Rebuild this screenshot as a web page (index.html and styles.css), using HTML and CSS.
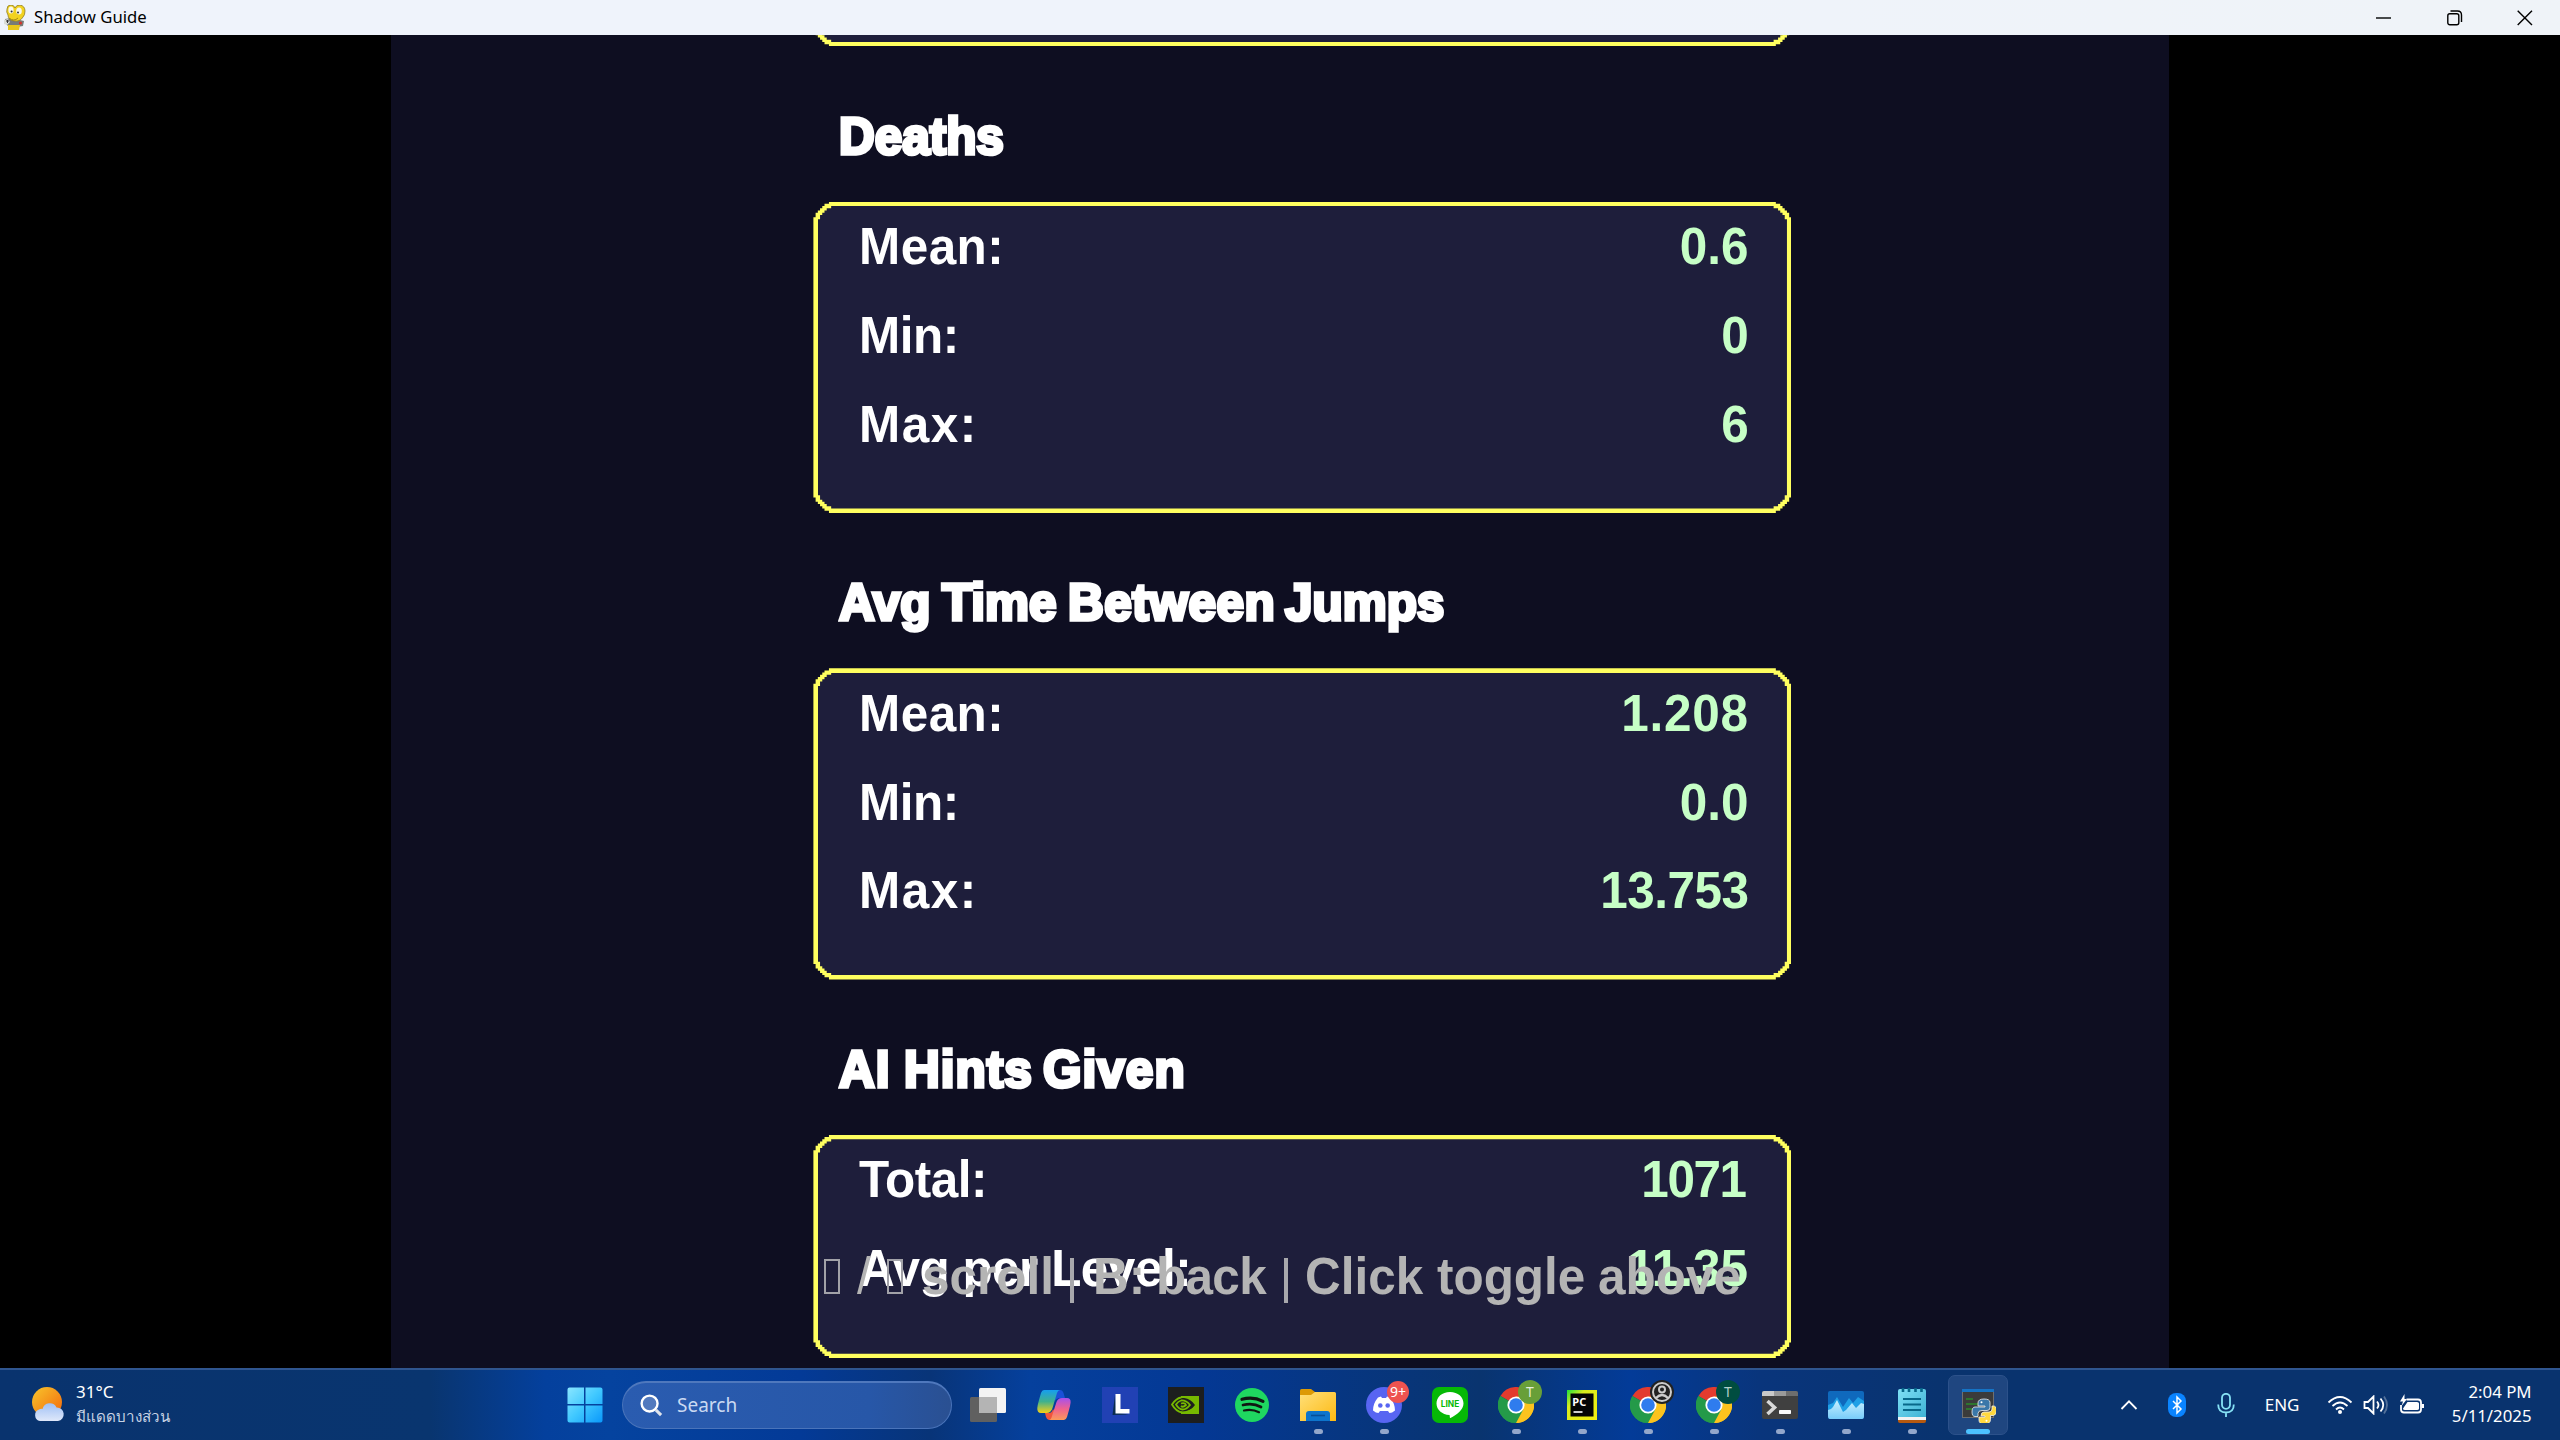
FILE: index.html
```html
<!DOCTYPE html>
<html lang="en">
<head>
<meta charset="utf-8">
<title>Shadow Guide</title>
<link rel="stylesheet" href="styles.css">
</head>
<body>
<header class="titlebar">
  <svg class="app-icon" viewBox="0 0 22 25">
    <path d="M1 14l6-1 9 2 4 1-1 5-6 1-9-1-3-3z" fill="#777c78"/>
    <path d="M4 20h12l-1 5H4z" fill="#e8c81c"/>
    <path d="M3 4Q3 0 7 0q3 0 4 3 1-3 5-3 5 1 5 6 0 4-2 6-3 5-9 4-6-1-6-6Q2 7 3 4z" fill="#f2d21f" stroke="#8f7d28" stroke-width=".8"/>
    <ellipse cx="7" cy="5" rx="2.6" ry="3.6" fill="#f7f7ee"/><ellipse cx="15" cy="6" rx="2.8" ry="3.6" fill="#f7f7ee"/>
    <circle cx="7.6" cy="6.6" r="1" fill="#333"/><circle cx="14" cy="7.4" r="1" fill="#333"/>
    <path d="M0 15l4-1 2 3-3 3-3-1z" fill="#d9dcd8"/><path d="M2 16h3M3.500 15v3" stroke="#333"/><circle cx="16.500" cy="18" r="1.600" fill="#d5322c"/>
    <path d="M5 13q5 4 9 0" fill="none" stroke="#a28718"/>
  </svg>
  <span class="title">Shadow Guide</span>
  <div class="window-buttons">
    <svg viewBox="0 0 16 16"><path d="M0 8h15" /></svg>
    <svg viewBox="0 0 16 16"><rect x=".8" y="3.800" width="11" height="11" rx="2"/><path d="M3.500 1h7q4 0 4 4v7"/></svg>
    <svg viewBox="0 0 16 16"><path d="M.7.7l14.300 14.300M15 .7L.7 15"/></svg>
  </div>
</header>

<main class="stage">
  <div class="game">
    <div class="card"></div>

    <section class="stat">
      <h2 class="h-deaths"><span>Deaths</span></h2>
      <div class="card">
        <div class="row"><span class="label mean">Mean:</span><span class="value">0.6</span></div>
        <div class="row"><span class="label">Min:</span><span class="value">0</span></div>
        <div class="row"><span class="label max">Max:</span><span class="value">6</span></div>
      </div>
    </section>

    <section class="stat">
      <h2 class="h-jumps"><span>Avg</span> <span>Time</span> <span class="loose">Between</span> <span>Jumps</span></h2>
      <div class="card">
        <div class="row"><span class="label mean">Mean:</span><span class="value wide">1.208</span></div>
        <div class="row"><span class="label">Min:</span><span class="value">0.0</span></div>
        <div class="row"><span class="label max">Max:</span><span class="value tight">13.753</span></div>
      </div>
    </section>

    <section class="stat">
      <h2 class="h-hints"><span>AI</span> <span>Hints</span> <span>Given</span></h2>
      <div class="card short">
        <div class="row"><span class="label">Total:</span><span class="value ends-one">1071</span></div>
        <div class="row"><span class="label">Avg per Level:</span><span class="value">11.35</span></div>
      </div>
    </section>

    <div class="hint">
      <i class="key"></i> <span class="slash">/</span> <i class="key"></i> <span>scroll</span> <b class="bar"></b> <span>B:</span> <span class="back">back</span> <b class="bar"></b> <span>Click</span> <span>toggle</span> <span>above</span>
    </div>
  </div>
</main>

<footer class="taskbar">
  <svg width="0" height="0" class="defs">
    <defs>
      <linearGradient id="sun" x1="0" y1="0" x2="1" y2="1"><stop offset="0" stop-color="#f8c62c"/><stop offset="1" stop-color="#f2660c"/></linearGradient>
      <linearGradient id="cloud" x1="0" y1="0" x2="0" y2="1"><stop offset="0" stop-color="#9fc0f5"/><stop offset="1" stop-color="#dfe8fa"/></linearGradient>
      <linearGradient id="win" x1="0" y1="0" x2="1" y2="1"><stop offset="0" stop-color="#8ae6ff"/><stop offset=".5" stop-color="#40c8ff"/><stop offset="1" stop-color="#0a98fb"/></linearGradient>
      <linearGradient id="cpA" x1="0" y1="0" x2="0" y2="1"><stop offset="0" stop-color="#169ef0"/><stop offset=".5" stop-color="#3fb18e"/><stop offset="1" stop-color="#f6cf16"/></linearGradient>
      <linearGradient id="cpB" x1="0" y1="0" x2="0" y2="1"><stop offset="0" stop-color="#a650ee"/><stop offset=".5" stop-color="#f0628e"/><stop offset="1" stop-color="#fb9a5a"/></linearGradient>
      <linearGradient id="folder" x1="0" y1="0" x2="1" y2="1"><stop offset="0" stop-color="#ffe07a"/><stop offset="1" stop-color="#fdb912"/></linearGradient>
      <linearGradient id="pc" x1="0" y1="0" x2="1" y2="1"><stop offset="0" stop-color="#1ee03c"/><stop offset=".3" stop-color="#d8ec1e"/><stop offset="1" stop-color="#f4ee10"/></linearGradient>
      <linearGradient id="water" x1="0" y1="0" x2="0" y2="1"><stop offset="0" stop-color="#c8f0ff"/><stop offset="1" stop-color="#78ccfa"/></linearGradient>
      <linearGradient id="note" x1="0" y1="0" x2="1" y2="1"><stop offset="0" stop-color="#7fe0f5"/><stop offset="1" stop-color="#3db2d4"/></linearGradient>
      <symbol id="chrome" viewBox="0 0 36 36">
        <path d="M18 18L2.400 9A18 18 0 0 1 33.600 9z" fill="#e33b2e"/>
        <path d="M18 18L33.600 9A18 18 0 0 1 18 36z" fill="#fcc31e"/>
        <path d="M18 18V36A18 18 0 0 1 2.400 9z" fill="#249a49"/>
        <path d="M18 9.500H33.900A18 18 0 0 1 18 36L25.400 22.200z" fill="#fcc31e"/>
        <path d="M2.400 9L10.600 22.300 18 26.500 25.400 22.300 18 36A18 18 0 0 1 2.400 9z" fill="#249a49"/>
        <circle cx="18" cy="18" r="8.600" fill="#fff"/><circle cx="18" cy="18" r="6.800" fill="#2f7cee"/>
      </symbol>
    </defs>
  </svg>

  <div class="weather">
    <svg viewBox="0 0 34 36">
      <circle cx="16" cy="16" r="15" fill="url(#sun)"/>
      <path d="M9 35a6 6 0 0 1-1-11.500q2-1 3.500-.5a7.500 7.500 0 0 1 14-1.500A6.800 6.800 0 0 1 27 35z" fill="url(#cloud)"/>
    </svg>
    <div class="weather-text"><span>31°C</span><span class="dim" lang="th">มีแดดบางส่วน</span></div>
  </div>

  <div class="apps">
    <div class="app start"><svg viewBox="0 0 36 36"><path d="M2.500.5H17V17H.5V2.500a2 2 0 0 1 2-2zM18.500.5h15a2 2 0 0 1 2 2V17h-17zM.5 18.500H17v17H2.500a2 2 0 0 1-2-2zM18.500 18.500h17v15a2 2 0 0 1-2 2h-15z" fill="url(#win)"/></svg></div>
    <div class="search">
      <svg viewBox="0 0 24 24"><circle cx="10" cy="10" r="8.300" fill="#ffffff30" stroke="#fff" stroke-width="2.500"/><path d="M16.500 16.500l5.500 5.500" stroke="#dfe4ec" stroke-width="3.200"/></svg>
      <span>Search</span>
    </div>
    <div class="app"><svg viewBox="0 0 36 36"><rect x="9" y="1" width="27" height="25" rx="1.500" fill="#f3f3f3"/><rect x="0" y="10" width="27" height="25" rx="1.500" fill="#606060"/><path d="M9 10h18v16H9z" fill="#b4b4b4"/></svg></div>
    <div class="app"><svg viewBox="0 0 36 36">
      <path d="M20 3h4q2.500 0 3.500 3l1.500 5h-5q-4 0-5.500 4z" fill="#1b50d8"/>
      <path d="M8 3h16q-2 0-3 3l-4.500 15q-1.500 5-6 5H5Q1 26 1.300 21q.3-3 1.700-8L5 6q1-3 3-3z" fill="url(#cpA)"/>
      <path d="M9 26h4q3 0 4-4l3 5q-1 6-5 6h-2q-2 0-3-3z" fill="#f0553c"/>
      <path d="M28 33H13q2 0 3-4l4.500-14q1.500-4 5.500-4h5q4 0 3.600 4.500-.3 3-1.600 7.500L31 30q-1 3-3 3z" fill="url(#cpB)"/>
    </svg></div>
    <div class="app"><svg viewBox="0 0 36 36"><path d="M0 0h36v36H0z" fill="#2141b4"/><path d="M13 8l-2.500 20 16-.5-12-2z" fill="#0a2c4e"/><path d="M13.500 7h5v15h9v4.500h-14z" fill="#fff"/></svg></div>
    <div class="app"><svg viewBox="0 0 36 36"><path d="M0 0h36v36H0z" fill="#1d1e1e"/><path d="M13 9h18v18H13z" fill="#77b900"/>
      <path d="M4 17.500Q10 10 16 11q7 1 11 7-5 7-12 7-8-2-11-7.500z" fill="#1d1e1e"/>
      <path d="M13 10.500q-5 1-9 7 4 7 10 8 7 0 13-5M13 13.500q-3 1-5 4 3 5 6.500 5 4 0 7.500-4.500-4-5-9-4.500M13 16.500q4-1 5 1.500-3 3-5 1" fill="none" stroke="#77b900" stroke-width="1.800"/></svg></div>
    <div class="app"><svg viewBox="0 0 36 36"><circle cx="18" cy="18" r="17" fill="#1fd760"/><g fill="none" stroke="#101712" stroke-linecap="round"><path d="M8 12.300q11-3.300 21 2" stroke-width="3.200"/><path d="M9 18q10-2.500 18 2" stroke-width="2.700"/><path d="M10 23.500q8-2 15 1.700" stroke-width="2.200"/></g></svg></div>
    <div class="app run"><svg viewBox="0 0 36 36"><path d="M0 8V3.500Q0 2 1.500 2H11l4 3v4z" fill="#dd9a05"/><path d="M0 8h11l4-3h19.500Q36 5 36 6.500V34H0z" fill="url(#folder)"/><path d="M6 34v-7q0-3 3-3h18q3 0 3 3v7z" fill="#0d74cc"/><path d="M11 28.500h14" stroke="#074f98" stroke-width="1.600"/></svg></div>
    <div class="app run"><svg viewBox="0 0 36 36"><circle cx="18" cy="18" r="18" fill="#5865f2"/><path d="M12 10.500l3-1 1 1.500h4l1-1.500 3 1q5 6 5 13-3 2.500-5.500 2.500l-1.500-2h-8l-1.500 2q-2.500 0-5.500-2.500 0-7 5-13z" fill="#fff"/><circle cx="14.300" cy="18.500" r="2.300" fill="#5865f2"/><circle cx="21.700" cy="18.500" r="2.300" fill="#5865f2"/></svg><span class="badge count">9+</span></div>
    <div class="app"><svg viewBox="0 0 36 36"><rect width="36" height="36" rx="7" fill="#06b906"/><path d="M18 5c8 0 13.500 5 13.500 11.500 0 6-7 11.500-13 14.500-1 .5-.5-2.500-1-3C10 27.500 4.500 23 4.500 16.500 4.500 10 10 5 18 5z" fill="#fff"/><text x="18" y="20" class="line-word">LINE</text></svg></div>
    <div class="app run"><svg><use href="#chrome"/></svg><span class="badge">T</span></div>
    <div class="app run"><svg viewBox="0 0 36 36"><path d="M3 3h30v30H3z" fill="url(#pc)"/><path d="M6.500 6.500h23v23h-23z" fill="#050505"/><path d="M9.500 25h9" stroke="#fff" stroke-width="1.600"/><text x="8.300" y="19" class="pc-word">PC</text></svg></div>
    <div class="app run"><svg><use href="#chrome"/></svg><span class="badge person"><svg viewBox="0 0 24 24"><circle cx="12" cy="12" r="9" fill="none" stroke="#ccc" stroke-width="2"/><circle cx="12" cy="9.500" r="3" fill="none" stroke="#ccc" stroke-width="2"/><path d="M6 18q6-6 12 0" fill="none" stroke="#ccc" stroke-width="2.400"/></svg></span></div>
    <div class="app run"><svg><use href="#chrome"/></svg><span class="badge teal">T</span></div>
    <div class="app run"><svg viewBox="0 0 36 36"><rect y="4" width="36" height="28" rx="2" fill="#404040"/><path d="M0 9V6q0-2 2-2h10v5z" fill="#c9c9c9"/><path d="M12 4h12v5H12z" fill="#9a9a9a"/><path d="M24 4h10q2 0 2 2v3H24z" fill="#6e6e6e"/><path d="M5.500 14l7 6.500-7 6.500" fill="none" stroke="#d8d8d8" stroke-width="3.600"/><rect x="17" y="23" width="12" height="4" rx=".8" fill="#fafafa"/></svg></div>
    <div class="app run"><svg viewBox="0 0 36 36"><rect y="4" width="36" height="28" rx="2" fill="#0f69bd"/><path d="M0 18l5-2 4-6 6 10 6-9 4 5 5-6 6 4v14H0z" fill="#1fa0e6"/><path d="M0 23q3 0 5-3l4-7 6 12 3-2 6-7 4 5 5-5 3 1v12q0 3-2 3H2q-2 0-2-3z" fill="url(#water)"/></svg></div>
    <div class="app run"><svg viewBox="0 0 36 36"><path d="M4 30h28v4q0 2-2 2H6q-2 0-2-2z" fill="#b6590f"/><path d="M4 29h28v4H4z" fill="#f2f2f2"/><path d="M4 4q0-2 2-2h24q2 0 2 2v26H4z" fill="url(#note)"/><path d="M9 12h18M9 17.500h18M9 23h18" stroke="#08688a" stroke-width="2"/><path d="M9 1v4M15 1v4M21.500 1v4M27.500 1v4" stroke="#08688a" stroke-width="2.600"/></svg></div>
    <div class="app run active"><svg viewBox="0 0 36 36"><path d="M2 2h32v29H2z" fill="#707070"/><path d="M3 4h30v26H3z" fill="#3b3b3b"/><path d="M2 2h32v3H2z" fill="#1673c4"/><path d="M6 12h7M6 17h12M6 22h6" stroke="#2b8a2b" stroke-width="1.400"/>
      <g stroke="#f1f1f1" stroke-width=".8"><path d="M24 12q-6 0-6 4v3h7v1H15q-3 0-3 5 0 4.500 3 4.500h3v-3q0-3 4-3h5q3 0 3-3v-5q0-3.500-6-3.500z" fill="#3b77a9"/><path d="M24 37q-5 0-5-4v-3h6v-1h-4q0-4 3-4h5q3 0 3-3v-3h1.500q3 0 3 4.500t-3 5h-3v4q0 4.500-6.500 4.500z" fill="#ffd83e"/></g><circle cx="21.500" cy="15.300" r="1" fill="#fff"/><circle cx="26.500" cy="33.700" r="1" fill="#fff"/></svg></div>
  </div>

  <div class="tray">
    <svg class="chev" viewBox="0 0 18 12"><path d="M1.500 10L9 2.300 16.500 10"/></svg>
    <svg class="bt" viewBox="0 0 18 24"><rect width="18" height="24" rx="8" fill="#0a84ff" stroke="none"/><path d="M5 8l8 8-4 4V4l4 4-8 8" stroke-width="1.500"/></svg>
    <svg class="mic" viewBox="0 0 18 24"><rect x="5" y=".8" width="8" height="15" rx="4"/><path d="M1.200 11.500q0 8 7.800 8t7.800-8M9 19.500V24"/></svg>
    <span class="lang">ENG</span>
    <svg class="wifi" viewBox="0 0 26 20"><path d="M1.500 7.500q11.500-11 23 0M5.500 11q7.500-7 15 0M9 14.500q4-4 8 0"/><circle cx="13" cy="17" r="2" fill="#fff" stroke="none"/></svg>
    <svg class="vol" viewBox="0 0 26 20"><path d="M1.500 7h3.500l5.500-5.500v17L5 13H1.500zM14 6.500q3 3.500 0 7M17.500 3.500q5.500 6.500 0 13"/><path d="M21 1.500q6 8.500 0 17" opacity=".3"/></svg>
    <svg class="batt" viewBox="0 0 26 22"><path d="M7.500 5.500H19q3 0 3 3v7q0 3-3 3H5q-3 0-3-3v-4.500"/><path d="M8.500 8H18q2 0 2 1.500v5q0 1.500-2 1.500H6q-2 0-2-1.500zM22.500 10h2.500v4h-2.500zM5.500 0L1 7.500h3L2.500 12 8 5H5.500z" fill="#fff" stroke="none"/></svg>
    <div class="clock"><span>2:04 PM</span><span>5/11/2025</span></div>
  </div>
</footer>
</body>
</html>
```
FILE: styles.css
```css
:root {
  --u: 2.2222px;
}

* { box-sizing: border-box; }

body {
  margin: 0;
  width: 2560px;
  height: 1440px;
  overflow: hidden;
  display: flex;
  flex-direction: column;
  background: #000;
  font-family: "Noto Sans", "Open Sans", sans-serif;
}

svg { display: block; flex: none; }

/* Window title bar */
.titlebar {
  height: 35px;
  flex: none;
  display: flex;
  align-items: center;
  padding: 0 27px 0 4px;
  background: linear-gradient(90deg, #eff3fb 60%, #eff3f8 94%);
  color: #000;
}
.app-icon { width: 22px; height: 25px; }
.title { margin-left: 8px; padding-bottom: 1px; font-size: 16.7px; line-height: 34px; }
.window-buttons { margin-left: auto; display: flex; gap: 54.5px; }
.window-buttons svg { width: 16px; height: 16px; fill: none; stroke: #000; stroke-width: 1.4; }

/* Game surface */
.stage {
  height: 1333px;
  flex: none;
  display: flex;
  justify-content: center;
  overflow: hidden;
}
.game {
  position: relative;
  width: 1778px;
  height: 1333px;
  padding-left: 422.4px;
  background: #0e0e21;
  font-family: "Liberation Sans", Arial, sans-serif;
  font-weight: 700;
  font-size: 51.5px;
  overflow: hidden;
}
.game > .card { margin-top: -300px; }
.stat { padding-top: 59.2px; }
.game span {
  display: inline-block;
  transform: scaleX(.96);
  transform-origin: 0 50%;
  white-space: nowrap;
}

h2 {
  margin: 0 0 36px;
  padding-left: 25.5px;
  display: grid;
  font-size: inherit;
  line-height: 60px;
  color: #fff;
  -webkit-text-stroke: 3.6px #fff;
}
.h-deaths { letter-spacing: 0; }
.h-jumps { grid-template-columns: 103px 126px 217px auto; }
.h-jumps .loose { letter-spacing: .6px; }
.h-hints { grid-template-columns: 65px 139px auto; letter-spacing: 1.1px; }

.card {
  position: relative;
  width: 978px;
  height: 311.4px;
  padding: .7px 43px 0 46px;
  background: #ffff5f;
  clip-path: polygon(
    0 calc(7*var(--u)), var(--u) calc(7*var(--u)), var(--u) calc(5*var(--u)), calc(2*var(--u)) calc(5*var(--u)), calc(2*var(--u)) calc(4*var(--u)), calc(3*var(--u)) calc(4*var(--u)), calc(3*var(--u)) calc(3*var(--u)), calc(4*var(--u)) calc(3*var(--u)), calc(4*var(--u)) calc(2*var(--u)), calc(5*var(--u)) calc(2*var(--u)), calc(5*var(--u)) var(--u), calc(7*var(--u)) var(--u), calc(7*var(--u)) 0,
    calc(100% - 7*var(--u)) 0, calc(100% - 7*var(--u)) var(--u), calc(100% - 5*var(--u)) var(--u), calc(100% - 5*var(--u)) calc(2*var(--u)), calc(100% - 4*var(--u)) calc(2*var(--u)), calc(100% - 4*var(--u)) calc(3*var(--u)), calc(100% - 3*var(--u)) calc(3*var(--u)), calc(100% - 3*var(--u)) calc(4*var(--u)), calc(100% - 2*var(--u)) calc(4*var(--u)), calc(100% - 2*var(--u)) calc(5*var(--u)), calc(100% - var(--u)) calc(5*var(--u)), calc(100% - var(--u)) calc(7*var(--u)), 100% calc(7*var(--u)),
    100% calc(100% - 7*var(--u)), calc(100% - var(--u)) calc(100% - 7*var(--u)), calc(100% - var(--u)) calc(100% - 5*var(--u)), calc(100% - 2*var(--u)) calc(100% - 5*var(--u)), calc(100% - 2*var(--u)) calc(100% - 4*var(--u)), calc(100% - 3*var(--u)) calc(100% - 4*var(--u)), calc(100% - 3*var(--u)) calc(100% - 3*var(--u)), calc(100% - 4*var(--u)) calc(100% - 3*var(--u)), calc(100% - 4*var(--u)) calc(100% - 2*var(--u)), calc(100% - 5*var(--u)) calc(100% - 2*var(--u)), calc(100% - 5*var(--u)) calc(100% - var(--u)), calc(100% - 7*var(--u)) calc(100% - var(--u)), calc(100% - 7*var(--u)) 100%,
    calc(7*var(--u)) 100%, calc(7*var(--u)) calc(100% - var(--u)), calc(5*var(--u)) calc(100% - var(--u)), calc(5*var(--u)) calc(100% - 2*var(--u)), calc(4*var(--u)) calc(100% - 2*var(--u)), calc(4*var(--u)) calc(100% - 3*var(--u)), calc(3*var(--u)) calc(100% - 3*var(--u)), calc(3*var(--u)) calc(100% - 4*var(--u)), calc(2*var(--u)) calc(100% - 4*var(--u)), calc(2*var(--u)) calc(100% - 5*var(--u)), var(--u) calc(100% - 5*var(--u)), var(--u) calc(100% - 7*var(--u)), 0 calc(100% - 7*var(--u)));
}
.card::before {
  content: "";
  position: absolute;
  inset: calc(2*var(--u));
  background: #1e1e3b;
  clip-path: polygon(
    0 calc(6*var(--u)), var(--u) calc(6*var(--u)), var(--u) calc(4*var(--u)), calc(2*var(--u)) calc(4*var(--u)), calc(2*var(--u)) calc(3*var(--u)), calc(3*var(--u)) calc(3*var(--u)), calc(3*var(--u)) calc(2*var(--u)), calc(4*var(--u)) calc(2*var(--u)), calc(4*var(--u)) var(--u), calc(6*var(--u)) var(--u), calc(6*var(--u)) 0,
    calc(100% - 6*var(--u)) 0, calc(100% - 6*var(--u)) var(--u), calc(100% - 4*var(--u)) var(--u), calc(100% - 4*var(--u)) calc(2*var(--u)), calc(100% - 3*var(--u)) calc(2*var(--u)), calc(100% - 3*var(--u)) calc(3*var(--u)), calc(100% - 2*var(--u)) calc(3*var(--u)), calc(100% - 2*var(--u)) calc(4*var(--u)), calc(100% - var(--u)) calc(4*var(--u)), calc(100% - var(--u)) calc(6*var(--u)), 100% calc(6*var(--u)),
    100% calc(100% - 6*var(--u)), calc(100% - var(--u)) calc(100% - 6*var(--u)), calc(100% - var(--u)) calc(100% - 4*var(--u)), calc(100% - 2*var(--u)) calc(100% - 4*var(--u)), calc(100% - 2*var(--u)) calc(100% - 3*var(--u)), calc(100% - 3*var(--u)) calc(100% - 3*var(--u)), calc(100% - 3*var(--u)) calc(100% - 2*var(--u)), calc(100% - 4*var(--u)) calc(100% - 2*var(--u)), calc(100% - 4*var(--u)) calc(100% - var(--u)), calc(100% - 6*var(--u)) calc(100% - var(--u)), calc(100% - 6*var(--u)) 100%,
    calc(6*var(--u)) 100%, calc(6*var(--u)) calc(100% - var(--u)), calc(4*var(--u)) calc(100% - var(--u)), calc(4*var(--u)) calc(100% - 2*var(--u)), calc(3*var(--u)) calc(100% - 2*var(--u)), calc(3*var(--u)) calc(100% - 3*var(--u)), calc(2*var(--u)) calc(100% - 3*var(--u)), calc(2*var(--u)) calc(100% - 4*var(--u)), var(--u) calc(100% - 4*var(--u)), var(--u) calc(100% - 6*var(--u)), 0 calc(100% - 6*var(--u)));
}
.card.short { height: 223.4px; }

.row {
  position: relative;
  display: flex;
  justify-content: space-between;
  height: 88.8px;
  line-height: 88.8px;
}
.label { color: #fff; letter-spacing: -.5px; }
.label.mean { letter-spacing: .5px; }
.label.max { letter-spacing: 1.6px; }
.game .value { color: #c6ffc6; transform-origin: 100% 50%; }
.game .wide { letter-spacing: .8px; margin-right: -.8px; }
.game .tight { letter-spacing: -.5px; }
.game .ends-one { margin-right: 3px; letter-spacing: -1.5px; }

/* Key hints are drawn over whatever has been scrolled underneath */
.hint {
  position: absolute;
  left: 433px;
  top: 1211px;
  display: grid;
  grid-template-columns: 33px 30px 34.5px 144.5px 27px 63px 123.5px 25.5px 132px 161px auto;
  line-height: 60px;
  color: #b4b4b4;
}
.key { width: 16px; height: 35px; margin-top: 13px; border: 2px solid #a2a2a8; }
.slash { font-weight: 400; }
.back { letter-spacing: -.7px; }
.bar { width: 4px; height: 45px; margin: 12px 0 0 4px; background: #a8a8ac; }

/* Taskbar */
.taskbar {
  height: 72px;
  flex: none;
  display: flex;
  align-items: center;
  border-top: 2px solid #2f558f;
  background: linear-gradient(90deg, #09336e 0, #09356f 430px, #04409d 545px, #05439f 610px, #033a97 800px, #083478 930px, #05409d 1030px, #043894 1200px, #09346f 1480px, #033b98 1630px, #09357c 1760px, #09336e 1950px, #09336e 2560px);
  color: #fff;
  font-size: 17px;
}
.defs { position: absolute; }
.weather { width: 551.5px; padding: 0 0 2px 31px; display: flex; align-items: center; gap: 11px; }
.weather svg { width: 34px; height: 36px; }
.weather-text, .clock { display: flex; flex-direction: column; line-height: 24px; }
.weather-text .dim { color: #c6d2e4; font-size: 15.2px; }

.apps { display: flex; align-items: center; height: 70px; padding-bottom: 1px; }
.app {
  position: relative;
  width: 66px;
  height: 60px;
  display: flex;
  align-items: center;
  justify-content: center;
}
.app > svg { width: 36px; height: 36px; }
.run::after {
  content: "";
  position: absolute;
  left: 28.5px;
  bottom: 1px;
  width: 9px;
  height: 5px;
  border-radius: 3px;
  background: #93a7cb;
}
.active::before {
  content: "";
  position: absolute;
  inset: 0 3px;
  border: 1px solid #2c518a;
  border-radius: 7px;
  background: #1f4680;
}
.active svg { position: relative; }
.active::after { left: 21px; width: 24px; background: #4cc2ff; }

.search {
  width: 330px;
  height: 48px;
  margin: 0 3px 0 4.5px;
  padding: 0 17px;
  display: flex;
  align-items: center;
  gap: 14px;
  border: 1px solid #4a74ba;
  border-top: 2px solid #4f78bd;
  border-radius: 24px;
  background: linear-gradient(90deg, #2a5cb0, #2757a8 75%, #2a5092);
  color: #cad9f2;
  font-size: 19px;
}
.search svg { width: 23px; height: 23px; fill: none; }
.search span { padding-bottom: 1px; }

.badge {
  position: absolute;
  left: 35px;
  top: 5px;
  width: 24px;
  height: 24px;
  border-radius: 50%;
  background: #689f38;
  color: #e4eedb;
  font-size: 14px;
  line-height: 24px;
  text-align: center;
}
.badge.teal { background: #004d40; color: #b3d0ca; }
.badge.person { background: #222; }
.badge.count { left: 36px; width: 22px; height: 22px; top: 6px; background: #ee5350; color: #fff; line-height: 21px; }
.line-word { font: 700 8.4px Inter, sans-serif; fill: #06b906; text-anchor: middle; }
.pc-word { font: 700 11px "Noto Sans", sans-serif; fill: #fff; }

.tray { margin-left: auto; padding: 0 28.5px 1px 0; display: flex; align-items: center; }
.tray svg { fill: none; stroke: #fff; stroke-width: 1.8; }
.chev { width: 18px; height: 12px; margin-right: 30px; }
.bt { width: 18px; height: 24px; margin-right: 31px; }
.mic { width: 18px; height: 24px; }
.tray .mic { stroke: #86e2f5; }
.lang { margin: 0 27px 0 30px; }
.wifi { width: 26px; height: 20px; margin-right: 10px; }
.vol { width: 26px; height: 20px; margin-right: 10px; }
.batt { width: 26px; height: 22px; }
.clock { width: 107px; padding-bottom: 2px; text-align: right; font-size: 16.8px; }
```
